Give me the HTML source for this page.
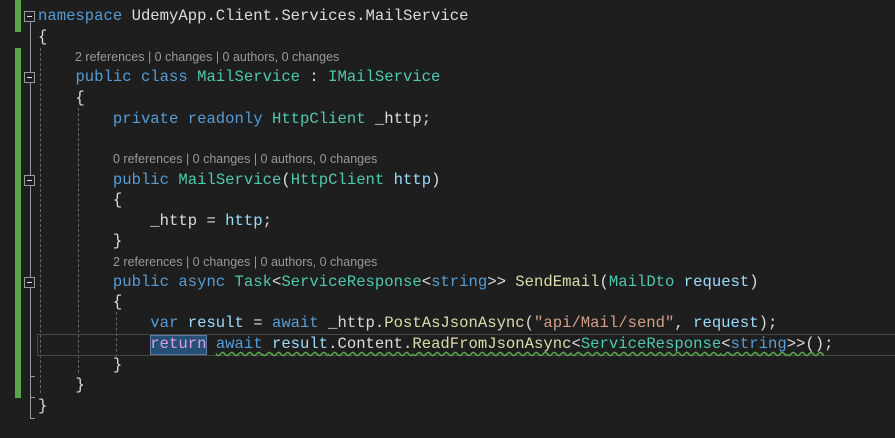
<!DOCTYPE html><html><head><style>
body{margin:0;width:895px;height:438px;background:#1e1e1e;overflow:hidden;position:relative;font-family:"Liberation Mono",monospace;font-size:15.6px}
.l{position:absolute;left:38px;height:20px;line-height:20px;white-space:pre;color:#dcdcdc}
.k{color:#569cd6}.t{color:#4ec9b0}.m{color:#dcdcaa}.s{color:#d69d85}.p{color:#9cdcfe}.r{color:#d8a0df}
.c{position:absolute;left:75px;font-family:"Liberation Sans",sans-serif;font-size:12.5px;color:#999;height:16px;line-height:16px;white-space:pre}
.g{position:absolute;left:15px;width:6px;background:#57a64a}
.box{position:absolute;left:24px;width:11px;height:11px;border:1px solid #999;box-sizing:border-box;background:#1e1e1e}
.box:after{content:"";position:absolute;left:2px;top:4px;width:5px;height:1px;background:#ddd}
.v{position:absolute;border-left:1px dashed #666}
.sv{position:absolute;left:30px;border-left:1px solid #999}
</style></head><body>
<div class="g" style="top:0;height:32px"></div>
<div class="g" style="top:48px;height:350px"></div>
<div class="sv" style="top:22px;height:396px"></div>
<div class="v" style="left:40px;top:48px;height:345px"></div>
<div class="v" style="left:78px;top:108px;height:265px"></div>
<div class="v" style="left:116px;top:312px;height:45px"></div>
<div style="position:absolute;left:30px;top:376px;width:5px;height:1px;background:#999"></div>
<div style="position:absolute;left:30px;top:397px;width:5px;height:1px;background:#999"></div>
<div style="position:absolute;left:30px;top:418px;width:5px;height:1px;background:#999"></div>
<div class="box" style="top:11px"></div>
<div class="box" style="top:72px"></div>
<div class="box" style="top:175px"></div>
<div class="box" style="top:277px"></div>
<div style="position:absolute;left:37px;top:334px;width:870px;height:20px;border:1px solid #464646"></div>
<div style="position:absolute;left:150px;top:335px;width:57px;height:20px;background:#264f78;border:1px solid #5a7da8;box-sizing:border-box"></div>
<div class="l" style="top:6px"><span class="k">namespace</span> UdemyApp.Client.Services.MailService</div>
<div class="l" style="top:27px">{</div>
<div class="c" style="top:49px">2 references | 0 changes | 0 authors, 0 changes</div>
<div class="l" style="top:67px">    <span class="k">public class</span> <span class="t">MailService</span> : <span class="t">IMailService</span></div>
<div class="l" style="top:88px">    {</div>
<div class="l" style="top:109px">        <span class="k">private readonly</span> <span class="t">HttpClient</span> _http;</div>
<div class="c" style="left:113px;top:151px">0 references | 0 changes | 0 authors, 0 changes</div>
<div class="l" style="top:170px">        <span class="k">public</span> <span class="t">MailService</span>(<span class="t">HttpClient</span> <span class="p">http</span>)</div>
<div class="l" style="top:190px">        {</div>
<div class="l" style="top:211px">            _http = <span class="p">http</span>;</div>
<div class="l" style="top:231px">        }</div>
<div class="c" style="left:113px;top:254px">2 references | 0 changes | 0 authors, 0 changes</div>
<div class="l" style="top:272px">        <span class="k">public async</span> <span class="t">Task</span>&lt;<span class="t">ServiceResponse</span>&lt;<span class="k">string</span>&gt;&gt; <span class="m">SendEmail</span>(<span class="t">MailDto</span> <span class="p">request</span>)</div>
<div class="l" style="top:292px">        {</div>
<div class="l" style="top:313px">            <span class="k">var</span> <span class="p">result</span> = <span class="k">await</span> _http.<span class="m">PostAsJsonAsync</span>(<span class="s">"api/Mail/send"</span>, <span class="p">request</span>);</div>
<div class="l" style="top:334px">            <span class="r">return</span> <span style="text-decoration:underline wavy #57a64a;text-underline-offset:3px"><span class="k">await</span> <span class="p">result</span>.Content.<span class="m">ReadFromJsonAsync</span>&lt;<span class="t">ServiceResponse</span>&lt;<span class="k">string</span>&gt;&gt;()</span>;</div>
<div class="l" style="top:355px">        }</div>
<div class="l" style="top:375px">    }</div>
<div class="l" style="top:396px">}</div>
</body></html>
